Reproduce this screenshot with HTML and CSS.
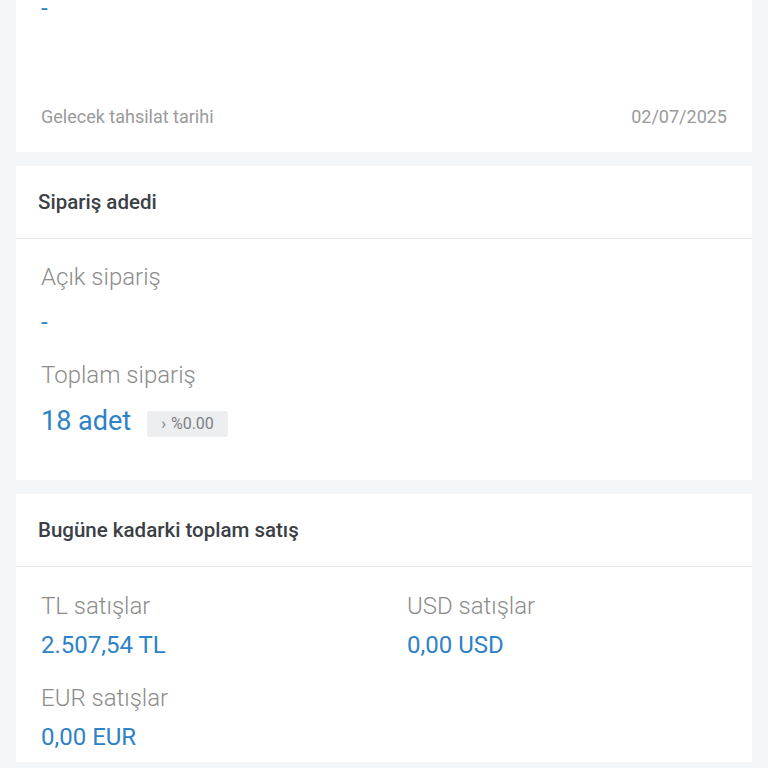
FILE: index.html
```html
<!DOCTYPE html>
<html lang="tr">
<head>
<meta charset="utf-8">
<link rel="stylesheet" href="styles.css">
</head>
<body>
<div class="page">
  <section class="card card-top">
    <div class="top-value">-</div>
    <div class="footer-row">
      <span>Gelecek tahsilat tarihi</span>
      <span>02/07/2025</span>
    </div>
  </section>

  <section class="card">
    <header class="card-head">Sipariş adedi</header>
    <div class="card-body orders">
      <div class="stat">
        <div class="label">Açık sipariş</div>
        <div class="value">-</div>
      </div>
      <div class="stat">
        <div class="label">Toplam sipariş</div>
        <div class="value value-big">18 adet <span class="badge"><span class="chev">›</span> %0.00</span></div>
      </div>
    </div>
  </section>

  <section class="card">
    <header class="card-head">Bugüne kadarki toplam satış</header>
    <div class="card-body sales">
      <div class="stat">
        <div class="label">TL satışlar</div>
        <div class="value">2.507,54 TL</div>
      </div>
      <div class="stat">
        <div class="label">USD satışlar</div>
        <div class="value">0,00 USD</div>
      </div>
      <div class="stat">
        <div class="label">EUR satışlar</div>
        <div class="value">0,00 EUR</div>
      </div>
    </div>
  </section>
</div>
</body>
</html>
```

FILE: styles.css
```css
* { box-sizing: border-box; }
html, body {
  margin: 0;
  padding: 0;
  background: #f3f6f8;
  font-family: Roboto, "Noto Sans", "Liberation Sans", sans-serif;
  height: 768px;
  overflow: hidden;
}
.page {
  padding: 0 16px;
  display: flex;
  flex-direction: column;
  gap: 14px;
}
.card {
  background: #ffffff;
}
.card-top {
  padding: 0 25px 20px;
}
.top-value {
  color: #2d82c8;
  font-size: 24px;
  line-height: 16px;
  height: 16px;
}
.footer-row {
  margin-top: 86px;
  display: flex;
  justify-content: space-between;
  color: #9a9a9a;
  font-size: 18px;
  line-height: 30px;
}
.card-head {
  height: 73px;
  padding: 0 22px;
  display: flex;
  align-items: center;
  border-bottom: 1px solid #e6e9ec;
  color: #3b4046;
  font-weight: 500;
  font-size: 20.5px;
}
.card-body {
  padding: 22px 25px 43px;
}
.orders {
  display: flex;
  flex-direction: column;
  gap: 21px;
}
.orders .value {
  margin-top: 13px;
}
.sales {
  padding-top: 24px;
  padding-bottom: 10px;
  display: grid;
  grid-template-columns: 1fr 1fr;
  column-gap: 46px;
  row-gap: 23px;
}
.sales .label, .sales .value {
  line-height: 30px;
}
.sales .value {
  margin-top: 9px;
}
.label {
  color: #8c8c8c;
  font-weight: 300;
  font-size: 24px;
  line-height: 32px;
}
.value {
  color: #2d82c8;
  font-size: 24px;
  line-height: 32px;
}
.value-big {
  font-size: 27px;
  display: flex;
  align-items: center;
}
.badge {
  margin-left: 16px;
  margin-top: 7px;
  background: #eceef0;
  border-radius: 3px;
  height: 26px;
  padding: 0 14px;
  display: inline-flex;
  align-items: center;
  gap: 5px;
  color: #7d8084;
  font-size: 16px;
  line-height: 26px;
}
.chev {
  font-size: 16px;
}
```
